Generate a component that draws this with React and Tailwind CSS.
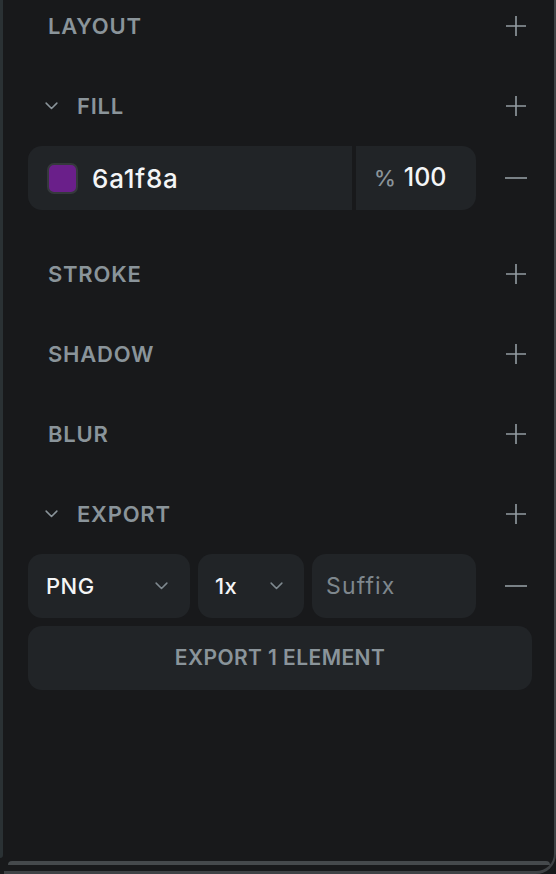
import React from "react";

const font = { fontFamily: "Inter, 'Noto Sans', sans-serif" };

function Plus() {
  return (
    <svg width="22" height="22" viewBox="0 0 22 22" fill="none">
      <path d="M11 1v20M1 11h20" stroke="#939ca2" strokeWidth="1.6" />
    </svg>
  );
}

function Minus() {
  return (
    <svg width="22" height="22" viewBox="0 0 22 22" fill="none">
      <path d="M0 11h22" stroke="#939ca2" strokeWidth="1.6" />
    </svg>
  );
}

function Chevron({ w = 13, color = "#7f898f" }) {
  return (
    <svg width={w} height={w * 0.6} viewBox="0 0 13 8" fill="none">
      <path d="M1 1.2l5.5 5.5L12 1.2" stroke={color} strokeWidth="1.6" strokeLinecap="round" strokeLinejoin="round" />
    </svg>
  );
}

function Header({ label, open }) {
  return (
    <div className="flex h-[52px] items-center justify-between">
      <div className="flex items-center">
        {open ? (
          <>
            <div className="ml-[16px] flex w-[14px] justify-center">
              <Chevron w={13} color="#8a949a" />
            </div>
            <span className="ml-[19px] text-[22px] font-semibold tracking-[0.035em] text-[#8a949a]">{label}</span>
          </>
        ) : (
          <span className="ml-[20px] text-[22px] font-semibold tracking-[0.035em] text-[#8a949a]">{label}</span>
        )}
      </div>
      <div className="flex h-[32px] w-[32px] items-center justify-center">
        <Plus />
      </div>
    </div>
  );
}

export default function App() {
  return (
    <div className="flex h-[874px] w-[556px] overflow-hidden bg-[#18191b]" style={font}>
      <div className="flex w-[4px] flex-col">
        <div className="h-[858px] w-[3px] rounded-br-[4px] bg-[#2a3134]" />
      </div>
      <div className="flex flex-1 flex-col rounded-br-[20px] border-r-[2px] border-b-[3px] border-[#3f4245] bg-[#18191b]">
        <div className="flex flex-1 flex-col pl-[24px] pr-[22px]">
          <Header label="LAYOUT" />
          <div className="h-[28px]" />
          <Header label="FILL" open />
          <div className="flex items-center justify-between pt-[14px] pb-[10px]">
            <div className="flex h-[64px] w-[448px] gap-[4px]">
              <div className="flex flex-1 items-center rounded-l-[14px] bg-[#212427] pl-[19px]">
                <div className="h-[31px] w-[31px] rounded-[7px] border-[2px] border-[#35393c] bg-[#6a1f8a]" />
                <span className="ml-[14px] text-[26px] font-medium tracking-[0.03em] text-[#f4f5f6]">6a1f8a</span>
              </div>
              <div className="flex w-[120px] items-center rounded-r-[14px] bg-[#212427] pl-[18px]">
                <span className="text-[22px] font-medium text-[#8a949a]">%</span>
                <span className="ml-[8px] text-[25px] font-medium text-[#f4f5f6]">100</span>
              </div>
            </div>
            <div className="flex h-[32px] w-[32px] items-center justify-center">
              <Minus />
            </div>
          </div>
          <div className="h-[28px]" />
          <Header label="STROKE" />
          <div className="h-[28px]" />
          <Header label="SHADOW" />
          <div className="h-[28px]" />
          <Header label="BLUR" />
          <div className="h-[28px]" />
          <Header label="EXPORT" open />
          <div className="flex flex-col gap-[8px] pt-[14px] pb-[10px]">
            <div className="flex items-center justify-between">
              <div className="flex h-[64px] w-[448px] gap-[8px]">
                <div className="flex w-[162px] items-center justify-between rounded-[14px] bg-[#212427] pl-[18px] pr-[22px]">
                  <span className="text-[22px] font-medium tracking-[0.02em] text-[#f4f5f6]">PNG</span>
                  <Chevron />
                </div>
                <div className="flex w-[106px] items-center justify-between rounded-[14px] bg-[#212427] pl-[17px] pr-[21px]">
                  <span className="text-[22px] font-medium tracking-[0.02em] text-[#f4f5f6]">1x</span>
                  <Chevron />
                </div>
                <div className="flex flex-1 items-center rounded-[14px] bg-[#212427] pl-[14px]">
                  <span className="text-[23px] tracking-[0.05em] text-[#7e878d]">Suffix</span>
                </div>
              </div>
              <div className="flex h-[32px] w-[32px] items-center justify-center">
                <Minus />
              </div>
            </div>
            <div className="flex h-[64px] items-center justify-center rounded-[14px] bg-[#212427]">
              <span className="text-[21px] font-semibold tracking-[0.02em] text-[#8a949a]">EXPORT 1 ELEMENT</span>
            </div>
          </div>
        </div>
        <div className="mx-[4px] h-[4px] rounded-t-[6px] bg-[#45494c]" />
        <div className="h-[6px]" />
      </div>
    </div>
  );
}
